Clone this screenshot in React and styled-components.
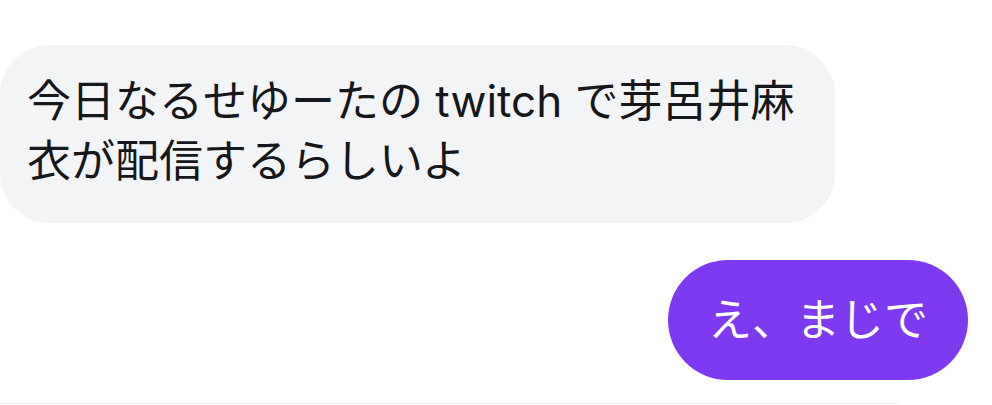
import React from "react";
import styled, { createGlobalStyle } from "styled-components";

const Global = createGlobalStyle`
  html, body { margin: 0; padding: 0; background: #ffffff; }
  body { font-family: Inter, "Noto Sans CJK JP", sans-serif; }
`;

const Thread = styled.div`
  width: 992px;
  height: 405px;
  box-sizing: border-box;
  padding-top: 45px;
  display: flex;
  flex-direction: column;
  gap: 37px;
  position: relative;
  overflow: hidden;
`;

const Row = styled.div`
  display: flex;
  justify-content: ${(p) => (p.$mine ? "flex-end" : "flex-start")};
  padding-right: ${(p) => (p.$mine ? "24px" : "0")};
`;

const Bubble = styled.div`
  box-sizing: border-box;
  font-family: Inter, "Noto Sans CJK JP", sans-serif;
  font-size: 44px;
  line-height: 60px;
  letter-spacing: 0;
  background: ${(p) => (p.$mine ? "#7d3af0" : "#f3f4f6")};
  color: ${(p) => (p.$mine ? "#ffffff" : "#16171a")};
  border-radius: ${(p) => (p.$mine ? "60px" : "50px")};
  padding: ${(p) => (p.$mine ? "30px 40px" : "26px 27px 32px 27px")};
  width: ${(p) => (p.$mine ? "auto" : "835px")};
  white-space: nowrap;
`;

const Divider = styled.div`
  position: absolute;
  left: 0;
  bottom: 1px;
  width: 900px;
  height: 1px;
  background: #f1f1f1;
`;

export default function App() {
  return (
    <>
      <Global />
      <Thread>
        <Row>
          <Bubble>
            今日なるせゆーたの twitch で芽呂井麻
            <br />
            衣が配信するらしいよ
          </Bubble>
        </Row>
        <Row $mine>
          <Bubble $mine>え、まじで</Bubble>
        </Row>
        <Divider />
      </Thread>
    </>
  );
}
